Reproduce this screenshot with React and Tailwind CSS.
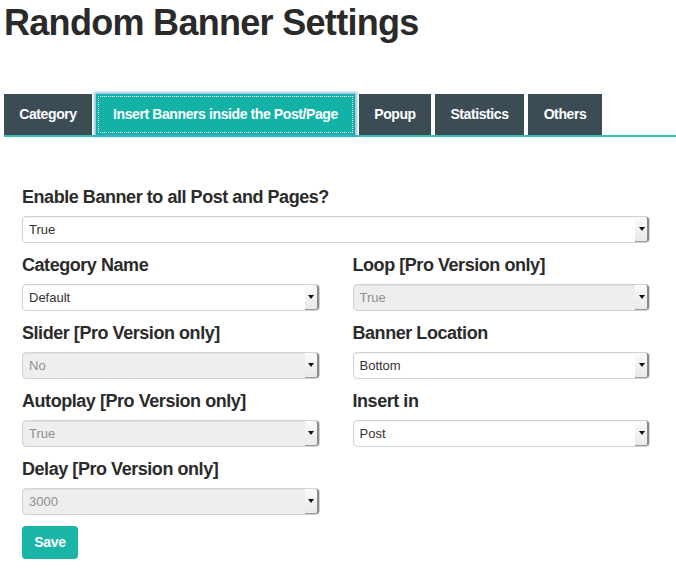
import React from "react";

function Select({ value, disabled }) {
  return (
    <div
      className={
        "flex h-[27px] items-stretch rounded-[4px] border border-[#d2d2d2] shadow-[inset_0_1px_1px_rgba(0,0,0,0.06)] " +
        (disabled ? "bg-[#eeeeee]" : "bg-white")
      }
    >
      <span
        className={
          "flex flex-1 items-center pl-[6px] text-[13px] " +
          (disabled ? "text-[#8f8f8f]" : "text-[#333333]")
        }
      >
        {value}
      </span>
      <span className="flex w-[14px] items-center justify-center rounded-r-[3px] border-r-2 border-b border-r-[#8c8c8c] border-b-[#9a9a9a] bg-gradient-to-b from-[#fbfbfb] to-[#e9e9e9] pl-[1px]">
        <span className="block h-0 w-0 border-x-[3.5px] border-t-[4px] border-x-transparent border-t-[#111]" />
      </span>
    </div>
  );
}

function Field({ label, value, disabled }) {
  return (
    <div className="flex flex-col">
      <div className="h-[24px] text-[18px] font-bold leading-[24px] tracking-[-0.45px] text-[#2b2b2b]">
        {label}
      </div>
      <div className="mt-[7px]">
        <Select value={value} disabled={disabled} />
      </div>
    </div>
  );
}

const tabs = [
  { name: "Category", w: "w-[88px]" },
  { name: "Insert Banners inside the Post/Page", w: "w-[259px]", active: true },
  { name: "Popup", w: "w-[72px]" },
  { name: "Statistics", w: "w-[89px]" },
  { name: "Others", w: "w-[74px]" },
];

export default function App() {
  return (
    <div
      className="min-h-[578px] w-[676px] bg-white text-[#2b2b2b]"
      style={{ fontFamily: '"Liberation Sans", Arial, sans-serif' }}
    >
      <h1 className="pl-[4px] pt-[3px] text-[36px] font-bold leading-[40px] tracking-[-0.7px] text-[#2a2a2a]">
        Random Banner Settings
      </h1>

      <div className="ml-[4px] mt-[51px] flex items-stretch gap-x-[4px] border-b-2 border-[#33c1b5]">
        {tabs.map((t) => (
          <div
            key={t.name}
            className={
              "flex h-[41px] items-center justify-center text-[14px] font-bold tracking-[-0.4px] text-white " +
              t.w +
              (t.active
                ? " bg-[#12b3a6] outline-1 outline-offset-[-3px] outline-dotted outline-white shadow-[0_0_2px_2px_rgba(70,150,210,0.55)]"
                : " bg-[#3c4c55]")
            }
          >
            {t.name}
          </div>
        ))}
      </div>

      <div className="ml-[22px] mt-[48px] w-[628px]">
        <Field label="Enable Banner to all Post and Pages?" value="True" />
        <div className="mt-[10px] grid grid-cols-2 gap-x-[33px] gap-y-[10px]">
          <Field label="Category Name" value="Default" />
          <Field label="Loop [Pro Version only]" value="True" disabled />
          <Field label="Slider [Pro Version only]" value="No" disabled />
          <Field label="Banner Location" value="Bottom" />
          <Field label="Autoplay [Pro Version only]" value="True" disabled />
          <Field label="Insert in" value="Post" />
          <Field label="Delay [Pro Version only]" value="3000" disabled />
        </div>
        <button className="mt-[11px] flex h-[33px] w-[56px] items-center justify-center rounded-[4px] bg-[#19b5a7] text-[14px] font-bold tracking-[-0.3px] text-white">
          Save
        </button>
      </div>
    </div>
  );
}
